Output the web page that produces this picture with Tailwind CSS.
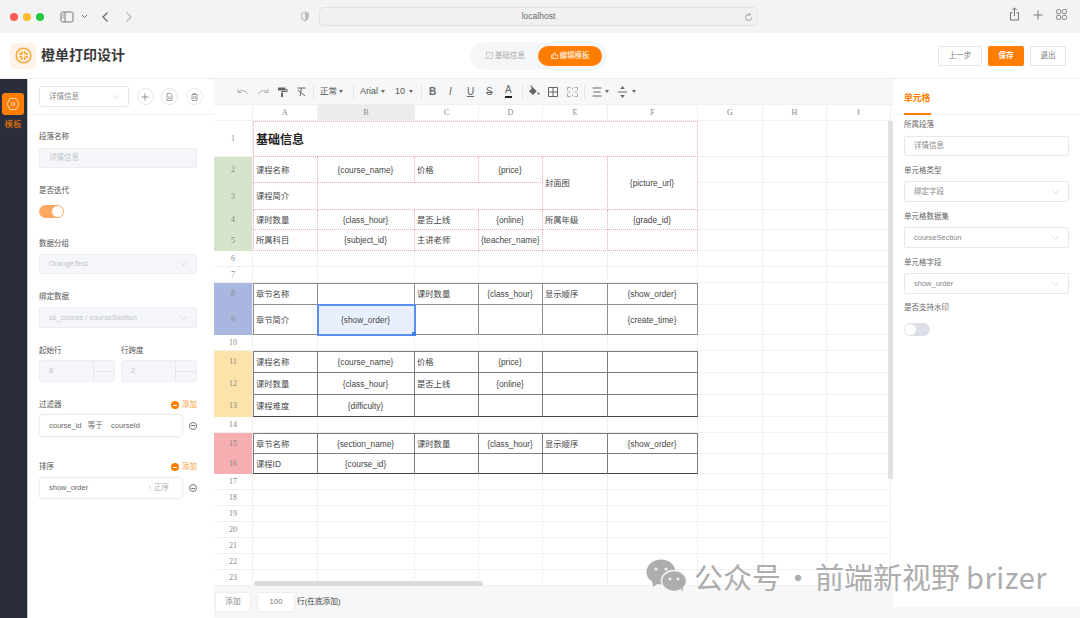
<!DOCTYPE html>
<html>
  <head>
    <meta charset="UTF-8" />
    <meta name="viewport" content="width=device-width, initial-scale=1.0" />
    <title>橙单打印设计</title>
    <script src="https://cdn.jsdelivr.net/npm/@tailwindcss/browser@4"></script>
  </head>
  <body class="w-[1080px] h-[618px] overflow-hidden relative bg-white text-[#555] font-['Liberation_Sans','Noto_Sans_CJK_SC',sans-serif]">
    <!-- browser bar -->
    <div class="h-[33px] bg-[#f3f3f3] flex items-center relative">
      <div class="flex gap-[5px] ml-[10px]">
        <span class="w-2 h-2 rounded-full bg-[#fc5b57]"></span>
        <span class="w-2 h-2 rounded-full bg-[#fdbb2e]"></span>
        <span class="w-2 h-2 rounded-full bg-[#27c840]"></span>
      </div>
      <svg class="ml-[16px]" width="14" height="12" viewBox="0 0 14 12" fill="none" stroke="#777" stroke-width="1"><rect x="1" y="1" width="12" height="10" rx="1.5"/><path d="M5 1v10"/><path d="M2.3 3.3h1.5M2.3 5h1.5M2.3 6.700h1.500" stroke-width=".7"/></svg>
      <svg class="ml-[7px]" width="7" height="5" viewBox="0 0 7 5" fill="none" stroke="#777"><path d="M1 1l2.500 2.500L6 1"/></svg>
      <svg class="ml-[13px]" width="8" height="12" viewBox="0 0 8 12" fill="none" stroke="#666" stroke-width="1.200"><path d="M6.500 1.500L2 6l4.500 4.500"/></svg>
      <svg class="ml-[16px]" width="8" height="12" viewBox="0 0 8 12" fill="none" stroke="#bbb" stroke-width="1.200"><path d="M1.500 1.500L6 6l-4.500 4.500"/></svg>
      <svg class="ml-[167px]" width="10" height="11" viewBox="0 0 10 11"><path d="M5 .5L9 2v3.500c0 2.500-2 4-4 5-2-1-4-2.500-4-5V2z" fill="#bdbdbd"/><path d="M5 1.500L2 2.600v2.900c0 1.900 1.500 3.100 3 3.900z" fill="#eee"/></svg>
      <div class="ml-[9px] w-[439px] h-[19px] border border-[#e2e2e2] rounded-[5px] bg-[#f1f1f1] flex items-center justify-center relative text-[8.500px] text-[#666]">
        localhost
        <svg class="absolute right-[4px] top-[4px]" width="9" height="10" viewBox="0 0 9 10" fill="none" stroke="#888" stroke-width=".8"><path d="M7.500 5.500a3 3 0 1 1-3-3h1.500M4.800 1l1.300 1.500L4.800 4"/></svg>
      </div>
      <svg class="absolute left-[1009px] top-[7px]" width="11" height="14" viewBox="0 0 11 14" fill="none" stroke="#777" stroke-width="1"><path d="M3.500 5.500H1.500v7.500h8V5.500h-2M5.500 9V1M3.300 3l2.200-2.200L7.700 3"/></svg>
      <svg class="absolute left-[1033px] top-[10px]" width="10" height="10" viewBox="0 0 10 10" fill="none" stroke="#777" stroke-width="1"><path d="M5 .5v9M.5 5h9"/></svg>
      <svg class="absolute left-[1056px] top-[9px]" width="11" height="11" viewBox="0 0 11 11" fill="none" stroke="#777" stroke-width=".9"><rect x=".6" y=".6" width="4" height="4" rx="1"/><rect x="6.400" y=".6" width="4" height="4" rx="1"/><rect x=".6" y="6.400" width="4" height="4" rx="1"/><rect x="6.400" y="6.400" width="4" height="4" rx="1"/></svg>
    </div>

    <!-- app header -->
    <div class="h-[46px] border-b border-[#eeeeee] flex items-center relative pl-[10px]">
      <div class="w-[26px] h-[26px] rounded-[5px] bg-[#fff2e8] flex items-center justify-center">
        <svg width="17" height="17" viewBox="0 0 17 17" fill="none" stroke="#f8a93e"><circle cx="8.500" cy="8.500" r="7.300" stroke-width="1.600"/><circle cx="8.500" cy="8.500" r="4.600" fill="#f8a93e" stroke="none"/><path d="M8.500 2v13M2 8.500h13M3.900 3.900l9.200 9.200M13.100 3.900l-9.200 9.200" stroke="#fff2e8" stroke-width=".9"/></svg>
      </div>
      <div class="ml-[5px] text-[14px] font-bold text-[#3a3a3a]">橙单打印设计</div>
      <div class="ml-[345px] w-[137px] h-[28px] rounded-full bg-[#f5f6f8] flex items-center justify-between pl-[16px] pr-[5px] text-[7.500px]">
        <span class="flex items-center gap-[2px] text-[#aaa]">
          <svg width="7" height="7" viewBox="0 0 7 7" fill="none" stroke="#bbb" stroke-width=".7"><rect x=".5" y=".5" width="6" height="6"/><path d="M2 5l3-3"/></svg>基础信息
        </span>
        <span class="w-[64px] h-[20px] rounded-full bg-[#ff7d00] text-white flex items-center justify-center gap-[2px]">
          <svg width="7" height="7" viewBox="0 0 7 7" fill="none" stroke="#fff" stroke-width=".7"><path d="M.5 3h1.500v3.500H.5zM2 3l1.500-2.500.8.5-.3 2h2.500v3.500H2"/></svg>编辑模板
        </span>
      </div>
      <div class="ml-auto mr-[14px] flex gap-[6px] text-[7.500px]">
        <button class="w-[44px] h-[20px] border border-[#e8e8e8] rounded-[2px] text-[#777]">上一步</button>
        <button class="w-[36px] h-[20px] rounded-[2px] bg-[#ff7d00] text-white font-bold">保存</button>
        <button class="w-[36px] h-[20px] border border-[#e8e8e8] rounded-[2px] text-[#777]">退出</button>
      </div>
    </div>

    <div class="flex h-[539px]">
      <!-- dark side nav -->
      <div class="w-[28px] shrink-0 bg-[#2a2e3c] border-r border-[#c4c6cc] flex flex-col items-center pt-[14px] pr-[1px]">
        <div class="w-[22px] h-[22px] rounded-[3px] bg-[#ff7d00] flex items-center justify-center">
          <svg width="14" height="14" viewBox="0 0 14 14" fill="none" stroke="#ffd9b0" stroke-width="1"><path d="M4 1.500h6L13 7l-3 5.500H4L1 7z"/><circle cx="7" cy="7" r="1.700"/></svg>
        </div>
        <div class="mt-[3px] text-[8.500px] text-[#ff7d00]">模板</div>
      </div>

      <!-- left panel -->
      <div class="w-[186px] shrink-0 text-[7.500px]">
        <div class="h-[36px] border-b border-[#f0f0f0] pl-[11px] flex items-center gap-[7.500px]">
          <div class="w-[90px] h-[21px] border border-[#e6e6e6] rounded-[3px] flex items-center justify-between px-[9px] text-[#888]">
            详情信息
            <svg width="7" height="4" viewBox="0 0 7 4" fill="none" stroke="#c4c4c4" stroke-width=".7"><path d="M.5.500l3 3 3-3"/></svg>
          </div>
          <span class="w-[17px] h-[17px] rounded-full border border-[#e6e6e6] flex items-center justify-center">
            <svg width="8" height="8" viewBox="0 0 8 8" fill="none" stroke="#777" stroke-width=".8"><path d="M4 .5v7M.5 4h7"/></svg>
          </span>
          <span class="w-[17px] h-[17px] rounded-full border border-[#e6e6e6] flex items-center justify-center">
            <svg width="7" height="8" viewBox="0 0 7 8" fill="none" stroke="#777" stroke-width=".7"><path d="M1 .5h3.500L6 2v5.500H1zM2.300 4h2.400M2.300 5.500h2.400"/></svg>
          </span>
          <span class="w-[17px] h-[17px] rounded-full border border-[#e6e6e6] flex items-center justify-center">
            <svg width="7" height="8" viewBox="0 0 7 8" fill="none" stroke="#777" stroke-width=".7"><path d="M1 1.500h5v6H1zM2.500 1.500V.6h2v.9M2.700 3.200v2.800M4.300 3.200v2.800"/></svg>
          </span>
        </div>
        <div class="pl-[11px] pr-[17px] flex flex-col">
          <div class="mt-[17px] leading-[10px]">段落名称</div>
          <div class="mt-[6px] h-[20px] rounded-[2px] border border-[#eceef2] bg-[#f5f6f9] flex items-center px-[9px] text-[#c0c4cc]">详情信息</div>
          <div class="mt-[18px] leading-[10px]">是否迭代</div>
          <div class="mt-[9px] w-[25px] h-[13px] rounded-full bg-[#ffa861] flex items-center justify-end pr-[1px]"><span class="w-[11px] h-[11px] rounded-full bg-white"></span></div>
          <div class="mt-[21px] leading-[10px]">数据分组</div>
          <div class="mt-[5px] h-[20px] rounded-[2px] border border-[#eceef2] bg-[#f5f6f9] flex items-center justify-between px-[9px] text-[#c0c4cc]">
            OrangeTest
            <svg width="7" height="4" viewBox="0 0 7 4" fill="none" stroke="#c4c8d0" stroke-width=".7"><path d="M.5.500l3 3 3-3"/></svg>
          </div>
          <div class="mt-[18px] leading-[10px]">绑定数据</div>
          <div class="mt-[5px] h-[21px] rounded-[2px] border border-[#eceef2] bg-[#f5f6f9] flex items-center justify-between px-[9px] text-[#c0c4cc]">
            zz_course / courseSection
            <svg width="7" height="4" viewBox="0 0 7 4" fill="none" stroke="#c4c8d0" stroke-width=".7"><path d="M.5.500l3 3 3-3"/></svg>
          </div>
          <div class="mt-[18px] grid grid-cols-[76px_76px] gap-x-[6px]">
            <div class="leading-[10px]">起始行</div>
            <div class="leading-[10px]">行跨度</div>
            <div class="mt-[4px] h-[22px] rounded-[3px] border border-[#eceef2] bg-[#f5f6f9] flex items-center pl-[9px] text-[#c0c4cc] relative">
              8
              <span class="absolute right-0 top-0 bottom-0 w-[21px] border-l border-[#e6e8ec] flex items-center"><span class="w-full border-t border-[#e6e8ec]"></span></span>
            </div>
            <div class="mt-[4px] h-[22px] rounded-[3px] border border-[#eceef2] bg-[#f5f6f9] flex items-center pl-[9px] text-[#c0c4cc] relative">
              2
              <span class="absolute right-0 top-0 bottom-0 w-[21px] border-l border-[#e6e8ec] flex items-center"><span class="w-full border-t border-[#e6e8ec]"></span></span>
            </div>
          </div>
          <div class="mt-[18px] flex items-center justify-between leading-[10px]">
            过滤器
            <span class="flex items-center gap-[3px] text-[#ff9a3d]"><span class="w-[8px] h-[8px] rounded-full bg-[#ff7d00] flex items-center justify-center"><span class="w-[4px] border-t border-white"></span></span>添加</span>
          </div>
          <div class="mt-[4px] flex items-center justify-between">
            <div class="w-[144px] h-[23px] border border-[#eeeeee] rounded-[3px] shadow-[0_0_2px_#f0f0f0] flex items-center pl-[9px] text-[#666] whitespace-pre">course_id   等于    courseId</div>
            <span class="w-[8px] h-[8px] rounded-full border border-[#777] flex items-center justify-center"><span class="w-[4px] border-t border-[#777]"></span></span>
          </div>
          <div class="mt-[25px] flex items-center justify-between leading-[10px]">
            排序
            <span class="flex items-center gap-[3px] text-[#ff9a3d]"><span class="w-[8px] h-[8px] rounded-full bg-[#ff7d00] flex items-center justify-center"><span class="w-[4px] border-t border-white"></span></span>添加</span>
          </div>
          <div class="mt-[5px] flex items-center justify-between">
            <div class="w-[144px] h-[22px] border border-[#eeeeee] rounded-[3px] shadow-[0_0_2px_#f0f0f0] flex items-center justify-between pl-[9px] pr-[13px] text-[#666]">
              show_order
              <span class="text-[#aaa]">↑ 正序</span>
            </div>
            <span class="w-[8px] h-[8px] rounded-full border border-[#777] flex items-center justify-center"><span class="w-[4px] border-t border-[#777]"></span></span>
          </div>
        </div>
      </div>

      <!-- spreadsheet -->
      <div class="w-[679px] shrink-0 flex flex-col bg-[#f6f7f8] relative">
        <div class="h-[26px] flex items-center text-[8.500px] text-[#555] relative border-b border-[#efefef]">
          <svg class="absolute left-[23px] top-[9px]" width="12" height="8" viewBox="0 0 12 8" fill="none" stroke="#aaa" stroke-width="1"><path d="M1 1v3.500h3.500M1.200 4.300C3 2 7.500 1.500 10.500 6"/></svg>
          <svg class="absolute left-[43px] top-[9px]" width="12" height="8" viewBox="0 0 12 8" fill="none" stroke="#aaa" stroke-width="1"><path d="M11 1v3.500H7.500M10.800 4.300C9 2 4.500 1.500 1.500 6"/></svg>
          <svg class="absolute left-[63px] top-[8px]" width="11" height="10" viewBox="0 0 11 10" fill="#666"><path d="M1 .5h7.500v3H1z"/><path d="M8.500 2h2v3H5.500v1.200H4.500V4h5V3h-1z"/><path d="M4 6h2v4H4z"/></svg>
          <svg class="absolute left-[82px] top-[8px]" width="11" height="10" viewBox="0 0 11 10" fill="none" stroke="#666" stroke-width="1"><path d="M1.500 1h8M5.500 1L4 9M2 3l7 6"/></svg>
          <span class="absolute left-[99px] top-[6px] h-[14px] border-l border-[#e4e4e4]"></span>
          <span class="absolute left-[106px]">正常</span><span class="absolute left-[125px] top-[11px] border-x-[2.500px] border-t-[3px] border-x-transparent border-t-[#666]"></span>
          <span class="absolute left-[139px] top-[6px] h-[14px] border-l border-[#e4e4e4]"></span>
          <span class="absolute left-[146px] text-[9px]">Arial</span><span class="absolute left-[167px] top-[11px] border-x-[2.500px] border-t-[3px] border-x-transparent border-t-[#666]"></span>
          <span class="absolute left-[181px] text-[9px]">10</span><span class="absolute left-[195px] top-[11px] border-x-[2.500px] border-t-[3px] border-x-transparent border-t-[#666]"></span>
          <span class="absolute left-[207px] top-[6px] h-[14px] border-l border-[#e4e4e4]"></span>
          <span class="absolute left-[215px] font-bold text-[10px] text-[#666]">B</span>
          <span class="absolute left-[235px] italic text-[10px] text-[#666]">I</span>
          <span class="absolute left-[253px] underline text-[10px] text-[#666]">U</span>
          <span class="absolute left-[272px] line-through text-[10px] text-[#666]">S</span>
          <span class="absolute left-[291px] top-[5px] text-[10px] leading-[12px] text-[#666] border-b-2 border-[#222]">A</span>
          <span class="absolute left-[308px] top-[6px] h-[14px] border-l border-[#e4e4e4]"></span>
          <svg class="absolute left-[314px] top-[6px]" width="12" height="12" viewBox="0 0 12 12" fill="#666"><path d="M2.500.8l.8-.5L4.500 2 8.800 6.300 5 10 1 6.200 3.700 3.200z"/><circle cx="10.500" cy="8.500" r="1.100"/></svg>
          <svg class="absolute left-[334px] top-[8px]" width="10" height="10" viewBox="0 0 10 10" fill="none" stroke="#666" stroke-width="1"><path d="M.5.5h9v9h-9zM5 .5v9M.5 5h9"/></svg>
          <svg class="absolute left-[353px] top-[8px]" width="11" height="10" viewBox="0 0 11 10" fill="none" stroke="#aaa" stroke-width="1"><path d="M3.500.5H.5v3M.5 6.500v3h3M7.500.5h3v3M10.500 6.500v3h-3M.5 5h3M7.500 5h3M5.500.5v2M5.500 7.500v2"/></svg>
          <span class="absolute left-[370px] top-[6px] h-[14px] border-l border-[#e4e4e4]"></span>
          <svg class="absolute left-[378px] top-[8px]" width="10" height="10" viewBox="0 0 10 10" fill="none" stroke="#666" stroke-width="1"><path d="M.5 1h9M1.500 5h7M.5 9h9"/></svg>
          <span class="absolute left-[391px] top-[11px] border-x-[2.500px] border-t-[3px] border-x-transparent border-t-[#666]"></span>
          <svg class="absolute left-[404px] top-[7px]" width="9" height="12" viewBox="0 0 9 12" fill="#666"><path d="M0 5.500h9v1H0zM4.500 0L6.800 3H2.200zM4.500 12L2.200 9h4.600z"/></svg>
          <span class="absolute left-[418px] top-[11px] border-x-[2.500px] border-t-[3px] border-x-transparent border-t-[#666]"></span>
        </div>

        <div class="h-[481px] overflow-hidden bg-white relative">
          <table class="table-fixed border-separate border-spacing-0 w-[637px] text-[8.300px] text-[#444] [&_td]:border-r [&_td]:border-b [&_td]:border-[#eff0f2] [&_td]:pl-[2px] [&_td]:pr-[3px] [&_td]:pt-[1px] [&_td]:whitespace-nowrap [&_th]:border-r [&_th]:border-b [&_th]:border-[#f0f0f0] [&_th]:pt-[1px] [&_th]:font-normal [&_th]:text-[8px] [&_th]:text-[#888] [&_th]:font-['Liberation_Serif',serif]">
            <colgroup>
              <col class="w-[39px]" /><col class="w-[65px]" /><col class="w-[97px]" /><col class="w-[64px]" /><col class="w-[64px]" /><col class="w-[65px]" /><col class="w-[90px]" /><col class="w-[65px]" /><col class="w-[64px]" /><col class="w-[64px]" />
            </colgroup>
            <thead>
              <tr class="h-[16px]">
                <th></th><th>A</th><th class="bg-[#ececec]">B</th><th>C</th><th>D</th><th>E</th><th>F</th><th>G</th><th>H</th><th>I</th>
              </tr>
            </thead>

            <tbody class="[&_th]:border-b-transparent! [&_tr:first-child_th]:border-b-[#f0f0f0]! [&_td:nth-last-child(n+4)]:border-dotted [&_td:nth-last-child(n+4)]:border-[#e8b0b0] [&_td:first-of-type]:border-l [&>tr:first-child>td:nth-last-child(n+4)]:border-t">
              <tr class="h-[36px]"><th>1</th><td colspan="6" class="text-[12px] font-bold text-[#222]">基础信息</td><td></td><td></td><td></td></tr>
              <tr class="h-[26px]"><th class="bg-[#d5e4cb]">2</th><td>课程名称</td><td class="text-center">{course_name}</td><td>价格</td><td class="text-center">{price}</td><td rowspan="2">封面图</td><td rowspan="2" class="text-center">{picture_url}</td><td></td><td></td><td></td></tr>
              <tr class="h-[27px]"><th class="bg-[#d5e4cb]">3</th><td>课程简介</td><td colspan="3"></td><td></td><td></td><td></td></tr>
              <tr class="h-[20px]"><th class="bg-[#d5e4cb]">4</th><td>课时数量</td><td class="text-center">{class_hour}</td><td>是否上线</td><td class="text-center">{online}</td><td>所属年级</td><td class="text-center">{grade_id}</td><td></td><td></td><td></td></tr>
              <tr class="h-[21px]"><th class="bg-[#d5e4cb]">5</th><td>所属科目</td><td class="text-center">{subject_id}</td><td>主讲老师</td><td class="text-center">{teacher_name}</td><td></td><td></td><td></td><td></td><td></td></tr>
            </tbody>

            <tbody>
              <tr class="h-[16px]"><th>6</th><td></td><td></td><td></td><td></td><td></td><td></td><td></td><td></td><td></td></tr>
              <tr class="h-[16px]"><th>7</th><td></td><td></td><td></td><td></td><td></td><td></td><td></td><td></td><td></td></tr>
            </tbody>

            <tbody class="[&_th]:border-b-transparent! [&_td:nth-last-child(n+4)]:border-[#8e8e8e] [&_td:first-of-type]:border-r-[#c4c4c4] [&_td:first-of-type]:border-l [&>tr:first-child>td:nth-last-child(n+4)]:border-t">
              <tr class="h-[22px]"><th class="bg-[#a9b6df]">8</th><td>章节名称</td><td></td><td>课时数量</td><td class="text-center">{class_hour}</td><td>显示顺序</td><td class="text-center">{show_order}</td><td></td><td></td><td></td></tr>
              <tr class="h-[30px]"><th class="bg-[#a9b6df]">9</th><td>章节简介</td><td class="text-center relative bg-[#e9f0fd] outline-2 -outline-offset-1 outline-[#5b8ff0]">{show_order}<span class="absolute right-[-2px] bottom-[-2px] w-[4px] h-[4px] bg-[#3f7cf0]"></span></td><td></td><td></td><td></td><td class="text-center">{create_time}</td><td></td><td></td><td></td></tr>
            </tbody>

            <tbody>
              <tr class="h-[16px]"><th>10</th><td></td><td></td><td></td><td></td><td></td><td></td><td></td><td></td><td></td></tr>
            </tbody>

            <tbody class="[&_th]:border-b-transparent! [&_td:nth-last-child(n+4)]:border-[#7c7c7c] [&_td:first-of-type]:border-r-[#c4c4c4] [&_td:first-of-type]:border-l [&>tr:first-child>td:nth-last-child(n+4)]:border-t [&>tr:last-child>td:nth-last-child(n+4)]:border-b-[#444]">
              <tr class="h-[22px]"><th class="bg-[#fce3ab]">11</th><td>课程名称</td><td class="text-center">{course_name}</td><td>价格</td><td class="text-center">{price}</td><td></td><td></td><td></td><td></td><td></td></tr>
              <tr class="h-[22px]"><th class="bg-[#fce3ab]">12</th><td>课时数量</td><td class="text-center">{class_hour}</td><td>是否上线</td><td class="text-center">{online}</td><td></td><td></td><td></td><td></td><td></td></tr>
              <tr class="h-[22px]"><th class="bg-[#fce3ab]">13</th><td>课程难度</td><td class="text-center">{difficulty}</td><td></td><td></td><td></td><td></td><td></td><td></td><td></td></tr>
            </tbody>

            <tbody>
              <tr class="h-[16px]"><th>14</th><td></td><td></td><td></td><td></td><td></td><td></td><td></td><td></td><td></td></tr>
            </tbody>

            <tbody class="[&_th]:border-b-transparent! [&_td:nth-last-child(n+4)]:border-[#7c7c7c] [&_td:first-of-type]:border-r-[#c4c4c4] [&_td:first-of-type]:border-l [&>tr:first-child>td:nth-last-child(n+4)]:border-t [&>tr:last-child>td:nth-last-child(n+4)]:border-b-[#444]">
              <tr class="h-[21px]"><th class="bg-[#f7aeb0]">15</th><td>章节名称</td><td class="text-center">{section_name}</td><td>课时数量</td><td class="text-center">{class_hour}</td><td>显示顺序</td><td class="text-center">{show_order}</td><td></td><td></td><td></td></tr>
              <tr class="h-[20px]"><th class="bg-[#f7aeb0]">16</th><td>课程ID</td><td class="text-center">{course_id}</td><td></td><td></td><td></td><td></td><td></td><td></td><td></td></tr>
            </tbody>

            <tbody>
              <tr class="h-[16px]"><th>17</th><td></td><td></td><td></td><td></td><td></td><td></td><td></td><td></td><td></td></tr>
              <tr class="h-[16px]"><th>18</th><td></td><td></td><td></td><td></td><td></td><td></td><td></td><td></td><td></td></tr>
              <tr class="h-[16px]"><th>19</th><td></td><td></td><td></td><td></td><td></td><td></td><td></td><td></td><td></td></tr>
              <tr class="h-[16px]"><th>20</th><td></td><td></td><td></td><td></td><td></td><td></td><td></td><td></td><td></td></tr>
              <tr class="h-[16px]"><th>21</th><td></td><td></td><td></td><td></td><td></td><td></td><td></td><td></td><td></td></tr>
              <tr class="h-[16px]"><th>22</th><td></td><td></td><td></td><td></td><td></td><td></td><td></td><td></td><td></td></tr>
              <tr class="h-[16px]"><th>23</th><td></td><td></td><td></td><td></td><td></td><td></td><td></td><td></td><td></td></tr>
            </tbody>
          </table>
          <!-- scrollbars -->
          <span class="absolute left-[40px] bottom-0 w-[229px] h-[5px] bg-[#d9dbdd] rounded-full"></span>
          <span class="absolute left-[674px] top-[16px] w-[5px] h-[358px] bg-[#dfe1e3]"></span>
        </div>

        <div class="flex-1 flex items-center pl-[1px] text-[7.700px] text-[#444]">
          <button class="w-[36px] h-[20px] bg-white border border-[#eeeeee] rounded-[2px] text-[#888]">添加</button>
          <div class="ml-[6px] w-[38px] h-[20px] bg-white border border-[#eeeeee] rounded-[2px] flex items-center justify-center text-[#777]">100</div>
          <span class="ml-[2px]">行(在底添加)</span>
        </div>
      </div>

      <!-- right panel -->
      <div class="flex-1 h-[528px] bg-white text-[7.500px] text-[#666]">
        <div class="h-[36px] border-b border-[#f0f0f0] pl-[11px]">
          <div class="w-[27px] h-[36px] border-b-2 border-[#ff7d00] text-[8.800px] font-bold text-[#ff7d00] pt-[13px] whitespace-nowrap">单元格</div>
        </div>
        <div class="pl-[11px] pr-[11px] flex flex-col">
          <div class="mt-[5px] leading-[10px]">所属段落</div>
          <div class="mt-[6px] h-[20px] border border-[#e8e8e8] rounded-[2px] flex items-center px-[9px] text-[#888]">详情信息</div>
          <div class="mt-[10px] leading-[10px]">单元格类型</div>
          <div class="mt-[5px] h-[21px] border border-[#e8e8e8] rounded-[2px] flex items-center justify-between px-[9px] text-[#888]">绑定字段<svg width="7" height="4" viewBox="0 0 7 4" fill="none" stroke="#c4c8d0" stroke-width=".7"><path d="M.5.500l3 3 3-3"/></svg></div>
          <div class="mt-[10px] leading-[10px]">单元格数据集</div>
          <div class="mt-[5px] h-[21px] border border-[#e8e8e8] rounded-[2px] flex items-center justify-between px-[9px] text-[#888]">courseSection<svg width="7" height="4" viewBox="0 0 7 4" fill="none" stroke="#c4c8d0" stroke-width=".7"><path d="M.5.500l3 3 3-3"/></svg></div>
          <div class="mt-[10px] leading-[10px]">单元格字段</div>
          <div class="mt-[5px] h-[21px] border border-[#e8e8e8] rounded-[2px] flex items-center justify-between px-[9px] text-[#888]">show_order<svg width="7" height="4" viewBox="0 0 7 4" fill="none" stroke="#c4c8d0" stroke-width=".7"><path d="M.5.500l3 3 3-3"/></svg></div>
          <div class="mt-[9px] leading-[10px]">是否支持水印</div>
          <div class="mt-[10px] w-[26px] h-[13px] rounded-full bg-[#dcdfe6] flex items-center pl-[1px]"><span class="w-[11px] h-[11px] rounded-full bg-white"></span></div>
        </div>
      </div>
    </div>
    <div class="absolute left-[893px] right-0 bottom-0 h-[11px] bg-[#f6f7f8]"></div>

    <!-- watermark over the page -->
    <div class="absolute left-[646px] top-[556px] flex items-center text-[#adadad] text-[29px] leading-[40px] font-['Noto_Sans_CJK_SC',sans-serif] whitespace-nowrap">
      <svg width="41" height="34" viewBox="0 0 41 34" fill="#adadad">
        <ellipse cx="15" cy="13" rx="14.500" ry="12.500"/><path d="M6 21l1 7 7-5z"/>
        <ellipse cx="28" cy="22" rx="12.500" ry="10.500" stroke="#f4f4f4" stroke-width="1.500"/><path d="M34 29l3 4-.5-7z"/>
        <circle cx="10" cy="10" r="1.600" fill="#eee"/><circle cx="20" cy="10" r="1.600" fill="#eee"/>
        <circle cx="24" cy="20" r="1.500" fill="#eee"/><circle cx="32" cy="20" r="1.500" fill="#eee"/>
      </svg>
      <span class="ml-[7px]">公众号</span>
      <span class="w-[34px] text-center">·</span>
      <span>前端新视野</span>
      <span class="ml-[6px] tracking-[0.5px]">brizer</span>
    </div>
  </body>
</html>
